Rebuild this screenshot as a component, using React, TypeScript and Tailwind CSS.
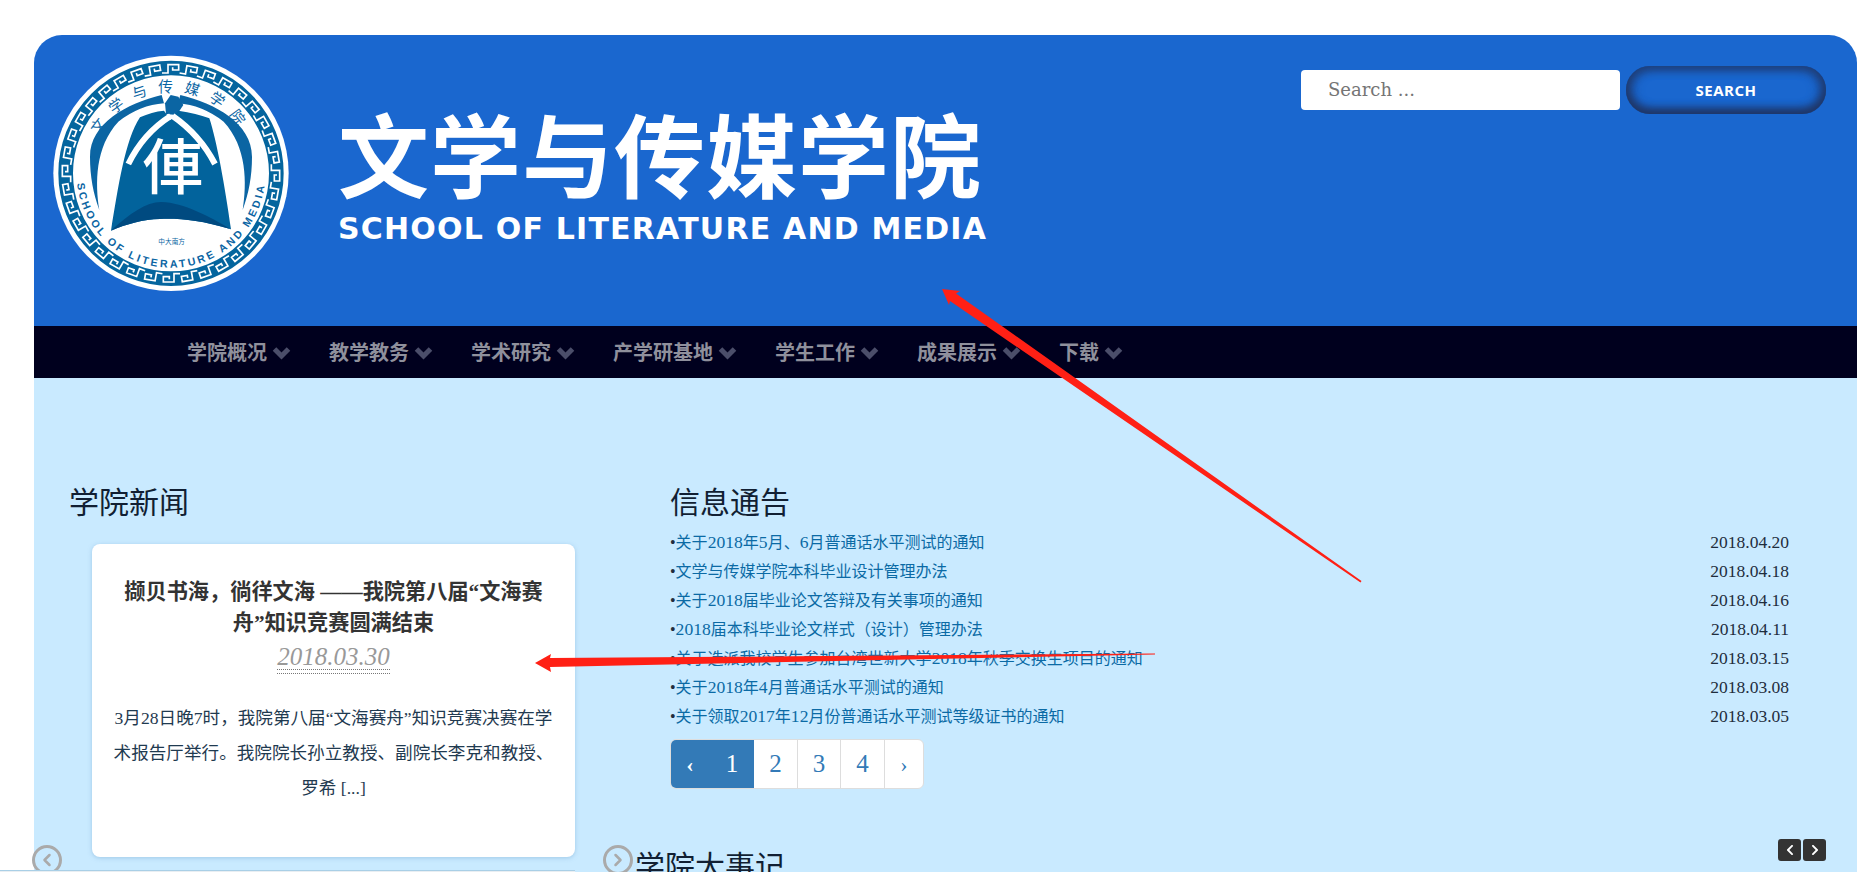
import { FaChevronLeft, FaChevronRight } from "react-icons/fa";
import { ChevronLeft, ChevronRight } from "lucide-react";

const navItems = ["学院概况", "教学教务", "学术研究", "产学研基地", "学生工作", "成果展示", "下载"];

const notices = [
  { title: "关于2018年5月、6月普通话水平测试的通知", date: "2018.04.20" },
  { title: "文学与传媒学院本科毕业设计管理办法", date: "2018.04.18" },
  { title: "关于2018届毕业论文答辩及有关事项的通知", date: "2018.04.16" },
  { title: "2018届本科毕业论文样式（设计）管理办法", date: "2018.04.11" },
  { title: "关于选派我校学生参加台湾世新大学2018年秋季交换生项目的通知", date: "2018.03.15" },
  { title: "关于2018年4月普通话水平测试的通知", date: "2018.03.08" },
  { title: "关于领取2017年12月份普通话水平测试等级证书的通知", date: "2018.03.05" },
];

const units = Array.from({ length: 36 }, (_, i) => i * 10);

function Logo() {
  return (
    <svg viewBox="0 0 810 810" className="w-[270px] h-[270px] shrink-0">
      <defs>
        <path id="arcTop" d="M148 400 A245 245 0 0 1 638 400" />
        <path id="arcBottom" d="M110 400 A283 283 0 0 0 676 400" />
      </defs>
      <circle cx="393" cy="400" r="353" fill="#fff" />
      <circle cx="393" cy="400" r="316" fill="none" stroke="#04659e" strokeWidth="44" />
      {/* meander ring */}
      {units.map((deg) => (
        <g key={deg} transform={`rotate(${deg} 393 400)`}>
          <path
            d="M366 99 H384 V74 H416 V90 H398 V82"
            fill="none"
            stroke="#fff"
            strokeWidth="5"
          />
        </g>
      ))}
      {/* wings */}
      <path d="M365 165 C260 190 150 250 150 350 C150 410 160 460 178 510 C165 430 165 320 235 245 Q300 195 372 190Z" fill="#0b65a3" />
      <path d="M421 165 C526 190 636 250 636 350 C636 410 626 460 608 510 C621 430 621 320 551 245 Q486 195 414 190Z" fill="#0b65a3" />
      <path d="M392 165 L415 170 L430 195 L410 225 L378 222 L375 190Z" fill="#0b65a3" />
      {/* bell */}
      <path d="M213 572 C235 440 255 300 300 232 Q335 215 372 212 L392 240 L415 212 Q470 220 508 235 C530 300 555 440 573 568 C480 540 420 535 360 537 C310 538 260 552 213 572Z" fill="#02639c" />
      <path d="M213 572 C270 520 320 485 365 486 C430 488 510 530 573 568 C480 540 420 535 360 537 C310 538 260 552 213 572Z" fill="#004a80" />
      <path d="M265 372 Q310 280 392 228 M525 372 Q480 285 398 228" fill="none" stroke="#fff" strokeWidth="18" />
      <text x="398" y="447" textAnchor="middle" fontSize="180" fontWeight="500" fill="#fff" fontFamily="Noto Sans CJK SC, sans-serif">俥</text>
      <text fontSize="44" fill="#0b65a3" fontFamily="Noto Sans CJK SC, sans-serif" letterSpacing="32">
        <textPath href="#arcTop" startOffset="50%" textAnchor="middle">文学与传媒学院</textPath>
      </text>
      <text fontSize="32" fontWeight="700" fill="#0b65a3" fontFamily="Liberation Sans, sans-serif" letterSpacing="8">
        <textPath href="#arcBottom" startOffset="50%" textAnchor="middle">SCHOOL OF LITERATURE AND MEDIA</textPath>
      </text>
      <text x="395" y="611" textAnchor="middle" fontSize="20" fill="#0b65a3" fontFamily="Noto Sans CJK SC, sans-serif">中大南方</text>
    </svg>
  );
}

function Header() {
  return (
    <header className="h-[291px] bg-[#1a67cf] rounded-t-[28px] flex overflow-hidden">
      <div className="ml-[6px] mt-[5px]">
        <Logo />
      </div>
      <div className="ml-[28px] mt-[71px] text-white">
        <h1 className="text-[91px] leading-[91px] font-bold tracking-[1px] font-['Noto_Sans_CJK_SC',sans-serif]">文学与传媒学院</h1>
        <p className="mt-[17px] text-[30px] leading-[30px] font-bold tracking-[1.2px] font-['DejaVu_Sans',sans-serif]">SCHOOL OF LITERATURE AND MEDIA</p>
      </div>
      <div className="ml-auto mr-[31px] mt-[31px] h-[48px] flex items-center gap-[6px]">
        <input
          placeholder="Search ..."
          className="w-[319px] h-[40px] bg-white rounded-[4px] pl-[27px] pb-[2px] text-[18px] font-['DejaVu_Serif',serif] placeholder:text-[#757575] outline-none"
        />
        <button className="w-[200px] h-[48px] rounded-full bg-[#1a67cf] text-white text-[15px] font-bold tracking-[0.5px] font-['Open_Sans',sans-serif] shadow-[inset_0_-5px_10px_#1f3565,inset_0_3px_10px_#1f4484,inset_5px_0_12px_#1f4484,inset_-5px_0_12px_#1f4484]">
          SEARCH
        </button>
      </div>
    </header>
  );
}

function Nav() {
  return (
    <nav className="h-[52px] bg-[#00001e] flex items-center pl-[153px] gap-[38px]">
      {navItems.map((item) => (
        <a key={item} className="flex items-center gap-[5px] text-[20px] font-bold text-[#8f909c] font-['Noto_Sans_CJK_SC',sans-serif]">
          {item}
          <svg viewBox="0 0 19 19" className="w-[19px] h-[19px] text-[#4b4e6a]">
            <path d="M2.5 6 L9.5 13 L16.5 6" fill="none" stroke="currentColor" strokeWidth="5" />
          </svg>
        </a>
      ))}
    </nav>
  );
}

function NewsCard() {
  return (
    <article className="ml-[23px] mt-[20px] w-[483px] h-[313px] bg-white rounded-[8px] shadow-[0_1px_4px_rgba(120,170,210,0.5)] text-center">
      <h3 className="pt-[33px] px-[30px] text-[21.2px] leading-[31px] font-bold text-[#333]">
        撷贝书海，徜徉文海 ——我院第八届“文海赛舟”知识竞赛圆满结束
      </h3>
      <p className="mt-[5px] h-[31px]">
        <span className="inline-block border-b border-dotted border-[#777] pb-[3px]">
          <span className="block border-b border-dotted border-[#777] text-[25px] leading-[25px] italic text-[#999]">2018.03.30</span>
        </span>
      </p>
      <p className="mt-[26px] px-[18px] text-[17.6px] leading-[35px] text-[#1f3a50]">
        3月28日晚7时，我院第八届“文海赛舟”知识竞赛决赛在学术报告厅举行。我院院长孙立教授、副院长李克和教授、罗希 [...]
      </p>
    </article>
  );
}

// digits in the list run a little larger than the chinese text
function NoticeTitle({ text }: { text: string }) {
  return (
    <>
      {text.split(/(\d+)/).map((part, i) =>
        /\d/.test(part) ? <span key={i} className="text-[17.6px]">{part}</span> : part
      )}
    </>
  );
}

function Pagination() {
  return (
    <div className="mt-[8px] flex w-[254px] h-[50px] rounded-[6px] overflow-hidden text-[#337ab7] text-[25px] bg-white border border-[#ddd]">
      <a className="w-[40px] -my-px -ml-px flex items-center justify-center bg-[#337ab7] text-white text-[22px] font-bold">‹</a>
      <a className="w-[44px] -my-px flex items-center justify-center bg-[#337ab7] text-white">1</a>
      <a className="w-[44px] flex items-center justify-center border-r border-[#ddd]">2</a>
      <a className="w-[43px] flex items-center justify-center border-r border-[#ddd]">3</a>
      <a className="w-[44px] flex items-center justify-center border-r border-[#ddd]">4</a>
      <a className="flex-1 flex items-center justify-center text-[22px]">›</a>
    </div>
  );
}

function Arrows() {
  return (
    <svg viewBox="0 0 1875 872" className="absolute inset-0 w-[1875px] h-[872px] pointer-events-none">
      <polygon points="942,289 960,291 956,293.5 1361.5,581 1360.5,582.5 950,301 949,305" fill="#ff2015" />
      <polygon points="535,663 551,654 550,658 1155,653.5 1155,654.5 550,667 551,672" fill="#ff2015" />
    </svg>
  );
}

export default function App() {
  return (
    <div className="relative h-[872px] overflow-hidden bg-white pt-[35px] pl-[34px] font-['Liberation_Serif','Noto_Sans_CJK_SC',serif]">
      <div className="w-[1823px]">
        <Header />
        <Nav />
        <main className="h-[600px] bg-[#c9eaff] flex pt-[104px] pl-[35px]">
          <section className="w-[601px] shrink-0">
            <h2 className="text-[30px] leading-[42px] text-[#111f33]">学院新闻</h2>
            <NewsCard />
          </section>
          <section className="w-[1119px] shrink-0">
            <h2 className="text-[30px] leading-[42px] text-[#111f33]">信息通告</h2>
            <ul className="mt-[4px]">
              {notices.map((n) => (
                <li key={n.date} className="h-[29px] flex items-center justify-between text-[16px] text-[#0b6aa5]">
                  <span><span className="text-[#1f2d3d]">•</span><NoticeTitle text={n.title} /></span>
                  <span className="text-[17.5px] text-[#1f2d3d]">{n.date}</span>
                </li>
              ))}
            </ul>
            <Pagination />
            <h2 className="mt-[57px] -ml-[35px] text-[30px] leading-[42px] text-[#111f33]">学院大事记</h2>
          </section>
        </main>
      </div>

      {/* carousel controls */}
      <span className="absolute left-[32px] top-[845px] w-[30px] h-[30px] rounded-full border-[3px] border-[#aaa] flex items-center justify-center text-[#aaa]">
        <ChevronLeft size={20} strokeWidth={3} />
      </span>
      <span className="absolute left-[603px] top-[845px] w-[30px] h-[30px] rounded-full border-[3px] border-[#aaa] flex items-center justify-center text-[#aaa]">
        <ChevronRight size={20} strokeWidth={3} />
      </span>
      <span className="absolute left-[1778px] top-[839px] w-[23px] h-[22px] rounded-[3px] bg-[#333] flex items-center justify-center text-white">
        <FaChevronLeft size={12} />
      </span>
      <span className="absolute left-[1803px] top-[839px] w-[23px] h-[22px] rounded-[3px] bg-[#333] flex items-center justify-center text-white">
        <FaChevronRight size={12} />
      </span>
      <div className="absolute left-0 top-[870px] w-[575px] h-[2px] bg-[#e9eef2] border-t border-[#a9cfe6]" />

      <Arrows />
    </div>
  );
}
